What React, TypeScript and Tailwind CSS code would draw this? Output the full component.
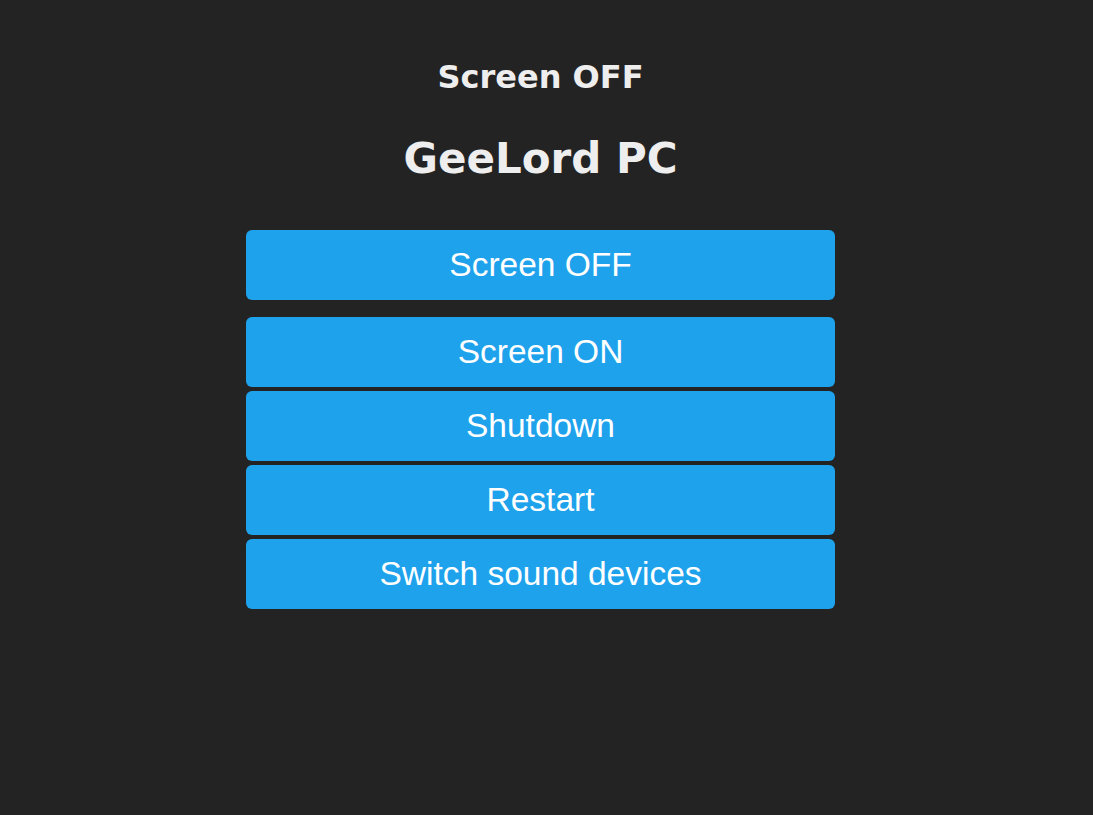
import React from 'react';

export default function App() {
  const buttons = ['Screen ON', 'Shutdown', 'Restart', 'Switch sound devices'];

  return (
    <div className="min-h-screen w-full bg-[#232323] flex flex-col items-center pr-[12px]">
      {/* Status line */}
      <div className="mt-[58px] text-[32px] leading-[38px] font-bold text-[#eeeeee] font-['DejaVu_Sans',Verdana,sans-serif]">
        Screen OFF
      </div>

      {/* Device name */}
      <h1 className="mt-[39px] text-[42px] leading-[48px] font-bold text-[#eeeeee] font-['DejaVu_Sans',Verdana,sans-serif]">
        GeeLord PC
      </h1>

      <div className="mt-[47px] w-[589px] flex flex-col font-['Liberation_Sans',Arial,sans-serif]">
        <button className="h-[70px] rounded-md bg-[#1fa2ec] text-white text-[33.5px]">
          Screen OFF
        </button>

        <div className="mt-[17px] flex flex-col gap-1">
          {buttons.map((label) => (
            <button
              key={label}
              className="h-[70px] rounded-md bg-[#1fa2ec] text-white text-[33.5px]"
            >
              {label}
            </button>
          ))}
        </div>
      </div>
    </div>
  );
}
